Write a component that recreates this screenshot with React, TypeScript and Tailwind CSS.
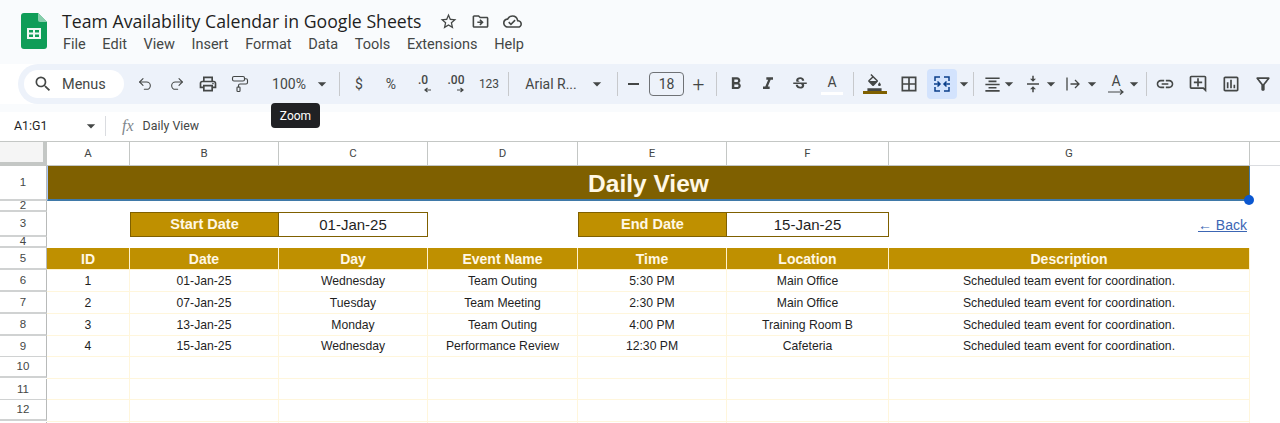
import type { ReactNode } from 'react';
import { PaintRoller, Redo2, Undo2 } from 'lucide-react';
import {
  MdArrowDropDown,
  MdBorderAll,
  MdFormatAlignCenter,
  MdFormatBold,
  MdFormatColorFill,
  MdFormatItalic,
  MdLink,
  MdOutlineAddComment,
  MdOutlineCloudDone,
  MdOutlineDriveFileMove,
  MdOutlineFilterAlt,
  MdOutlineInsertChart,
  MdOutlinePrint,
  MdOutlineStarBorder,
  MdSearch,
  MdStrikethroughS,
  MdVerticalAlignCenter,
} from 'react-icons/md';

const menus = ['File', 'Edit', 'View', 'Insert', 'Format', 'Data', 'Tools', 'Extensions', 'Help'];

const columns = ['A', 'B', 'C', 'D', 'E', 'F', 'G'];

const headers = ['ID', 'Date', 'Day', 'Event Name', 'Time', 'Location', 'Description'];

const note = 'Scheduled team event for coordination.';

const events = [
  ['1', '01-Jan-25', 'Wednesday', 'Team Outing', '5:30 PM', 'Main Office', note],
  ['2', '07-Jan-25', 'Tuesday', 'Team Meeting', '2:30 PM', 'Main Office', note],
  ['3', '13-Jan-25', 'Monday', 'Team Outing', '4:00 PM', 'Training Room B', note],
  ['4', '15-Jan-25', 'Wednesday', 'Performance Review', '12:30 PM', 'Cafeteria', note],
];

function SheetsLogo() {
  return (
    <svg width="26" height="36" viewBox="0 0 26 36">
      <path d="M3 0h14l9 9v24a3 3 0 0 1-3 3H3a3 3 0 0 1-3-3V3a3 3 0 0 1 3-3z" fill="#0f9d58" />
      <path d="M17 0l9 9h-7a2 2 0 0 1-2-2z" fill="#87ceac" />
      <path d="M6 15h14v11H6z M8 17v2.500h4V17z M14 17v2.500h4V17z M8 21.500V24h4v-2.500z M14 21.500V24h4v-2.500z" fill="#f1f8f4" fillRule="evenodd" />
    </svg>
  );
}

function Tool({ w, children }: { w: string; children: ReactNode }) {
  return <div className={`flex h-full shrink-0 items-center justify-center ${w}`}>{children}</div>;
}

function Sep({ className = '' }: { className?: string }) {
  return <div className={`h-[24px] w-px shrink-0 bg-[#c7c9cc] ${className}`} />;
}

function Drop({ w = 'w-[20px]' }: { w?: string }) {
  return (
    <Tool w={w}>
      <MdArrowDropDown size={20} className="shrink-0" />
    </Tool>
  );
}

function MergeIcon() {
  return (
    <svg width="18" height="18" viewBox="0 0 18 18" fill="none" stroke="#0b3f8a" strokeWidth="1.500">
      <path d="M2 6V2h5M16 6V2h-5M2 12v4h5M16 12v4h-5" />
      <path d="M1 9h6M4.500 6.500 7 9l-2.500 2.500M17 9h-6M13.500 6.500 11 9l2.500 2.500" />
    </svg>
  );
}

function WrapIcon() {
  return (
    <svg width="18" height="18" viewBox="0 0 18 18" fill="none" stroke="#444746" strokeWidth="1.300">
      <path d="M3 2.500v13M6.500 9H15M11 5l4 4-4 4" />
    </svg>
  );
}

function RotateIcon() {
  return (
    <div className="flex h-[21px] w-[18px] flex-col items-center">
      <span className="text-[14px] leading-[15px]">A</span>
      <svg width="18" height="6" viewBox="0 0 18 6" fill="none" stroke="#444746" strokeWidth="1.200">
        <path d="M1 3h15M13 .5 16 3l-3 2.500" />
      </svg>
    </div>
  );
}

function DecimalIcon({ label, arrow }: { label: string; arrow: 'left' | 'right' }) {
  return (
    <div className="flex h-[22px] w-[22px] flex-col text-center text-[12px] font-medium leading-[14px]">
      {label}
      <svg width="22" height="6" viewBox="0 0 22 6" fill="none" stroke="#444746" strokeWidth="1.200">
        {arrow === 'left' ? <path d="M19 3h-6M15.500 1 13 3l2.500 2" /> : <path d="M12 3h6M15.500 1 18 3l-2.500 2" />}
      </svg>
    </div>
  );
}

function Toolbar() {
  return (
    <div className="relative ml-[18px] flex h-[40px] items-center rounded-l-[20px] bg-[#edf2fa] pl-[6px] text-[#444746]">
      <div className="mr-[5px] flex h-[28px] w-[100px] shrink-0 items-center rounded-full bg-white pl-[9px]">
        <MdSearch size={20} />
        <span className="ml-[9px] mt-[1px] text-[14.500px]">Menus</span>
      </div>
      <Tool w="w-[32px]"><Undo2 size={16} strokeWidth={1.600} /></Tool>
      <Tool w="w-[31px]"><Redo2 size={16} strokeWidth={1.600} /></Tool>
      <Tool w="w-[32px]"><MdOutlinePrint size={20} /></Tool>
      <Tool w="w-[32px]"><PaintRoller size={18} strokeWidth={1.500} /></Tool>
      <Tool w="w-[56px]"><span className="pl-[10px] text-[14px]">100%</span></Tool>
      <Drop />
      <Sep className="ml-[7px]" />
      <Tool w="w-[38px]"><span className="text-[14px]">$</span></Tool>
      <Tool w="w-[26px]"><span className="text-[14px]">%</span></Tool>
      <Tool w="w-[38px]"><DecimalIcon label=".0" arrow="left" /></Tool>
      <Tool w="w-[28px]"><DecimalIcon label=".00" arrow="right" /></Tool>
      <Tool w="w-[38px]"><span className="text-[12px]">123</span></Tool>
      <Sep />
      <Tool w="w-[74px]"><span className="pl-[10px] text-[14px]">Arial R...</span></Tool>
      <Drop w="w-[28px]" />
      <Sep className="ml-[6px]" />
      <Tool w="w-[31px]"><span className="h-[1.500px] w-[11px] bg-[#444746]" /></Tool>
      <div className="flex h-[24px] w-[35px] shrink-0 items-center justify-center rounded-[4px] border border-[#6f7276] text-[14px]">18</div>
      <Tool w="w-[29px]"><span className="text-[21px] font-light leading-none">+</span></Tool>
      <Sep className="ml-[3px]" />
      <Tool w="w-[37px]"><MdFormatBold size={20} /></Tool>
      <Tool w="w-[28px]"><MdFormatItalic size={20} /></Tool>
      <Tool w="w-[36px]"><MdStrikethroughS size={18} /></Tool>
      <Tool w="w-[28px]">
        <div className="flex flex-col items-center">
          <span className="text-[14px] leading-[16px]">A</span>
          <span className="mt-[2px] h-[3px] w-[22px] bg-white" />
        </div>
      </Tool>
      <Sep className="ml-[7px]" />
      <Tool w="w-[41px]">
        <div className="flex flex-col items-center">
          <MdFormatColorFill size={17} />
          <span className="h-[3px] w-[24px] bg-[#7f6000]" />
        </div>
      </Tool>
      <Tool w="w-[27px]"><MdBorderAll size={20} /></Tool>
      <div className="ml-[5px] flex h-[30px] w-[30px] shrink-0 items-center justify-center rounded-[4px] bg-[#d3e3fd]">
        <MergeIcon />
      </div>
      <Drop w="w-[13px]" />
      <Sep className="ml-[3px]" />
      <div className="ml-[5px] flex h-full shrink-0 items-center">
        <Tool w="w-[26px]"><MdFormatAlignCenter size={19} /></Tool>
        <Drop w="w-[8px]" />
      </div>
      <div className="ml-[7px] flex h-full shrink-0 items-center">
        <Tool w="w-[26px]"><MdVerticalAlignCenter size={18} /></Tool>
        <Drop w="w-[10px]" />
      </div>
      <div className="ml-[4px] flex h-full shrink-0 items-center">
        <Tool w="w-[26px]"><WrapIcon /></Tool>
        <Drop w="w-[12px]" />
      </div>
      <div className="ml-[5px] flex h-full shrink-0 items-center">
        <Tool w="w-[26px]"><RotateIcon /></Tool>
        <Drop w="w-[10px]" />
      </div>
      <Sep className="ml-[7px]" />
      <Tool w="w-[36px]"><MdLink size={20} /></Tool>
      <Tool w="w-[30px]"><MdOutlineAddComment size={20} /></Tool>
      <Tool w="w-[36px]"><MdOutlineInsertChart size={20} /></Tool>
      <Tool w="w-[28px]"><MdOutlineFilterAlt size={20} /></Tool>
      <div className="absolute left-[253px] top-[39px] z-10 flex h-[25px] w-[49px] items-center justify-center rounded-[4px] bg-[#202124] text-[12px] text-white">
        Zoom
      </div>
    </div>
  );
}

function RowNum({ n, h }: { n: number; h: string }) {
  return (
    <div className={`flex ${h} items-center justify-center border-b-[2px] border-r border-[#d0d2d2] border-r-[#b8bab9] bg-white pt-[1px] text-[11.500px] text-[#444746]`}>
      {n}
    </div>
  );
}

function Grid() {
  return (
    <div className="grid grid-cols-[47px_83px_149px_149px_150px_149px_162px_361px_1fr] grid-rows-[24px_35px_11px_25px_11px_22px_22px_22px_22px_21px_22px_21px_22px_3px] border-t border-[#c4c7c5] font-['Liberation_Sans',sans-serif] text-[12.200px] text-[#1f1f1f]">
      {/* Column letters */}
      <div className="border-b-[4px] border-r-[4px] border-[#c4c7c5] bg-[#f5f5f5]" />
      {columns.map((c) => (
        <div key={c} className="flex items-center justify-center border-b border-r border-[#c4c7c5] font-['Roboto',sans-serif] text-[11.500px] text-[#444746]">
          {c}
        </div>
      ))}
      <div className="border-b border-[#dadce0]" />

      {/* Row 1 title */}
      <RowNum n={1} h="h-[35px]" />
      <div className="col-span-7 flex items-center justify-center border-b-[2px] border-l border-r border-[#3f79a8] border-l-[#a8c7fa] bg-[#7f6000] pt-[3px] text-[24.500px] font-bold text-[#fff8e6]">
        Daily View
      </div>
      <div className="relative">
        <span className="absolute left-[-6px] top-[29px] z-10 h-[10px] w-[10px] rounded-full bg-[#0b57d0]" />
      </div>

      {/* Row 2 */}
      <RowNum n={2} h="h-[11px]" />
      <div className="col-span-8" />

      {/* Row 3 date range */}
      <RowNum n={3} h="h-[25px]" />
      <div />
      <div className="flex items-center justify-center border border-[#7f6000] bg-[#bf9000] pt-[1px] text-[14.500px] font-bold text-[#fff8e6]">Start Date</div>
      <div className="flex items-center justify-center border border-l-0 border-[#7f6000] bg-white pt-[1px] text-[15px]">01-Jan-25</div>
      <div />
      <div className="flex items-center justify-center border border-[#7f6000] bg-[#bf9000] pt-[1px] text-[14.500px] font-bold text-[#fff8e6]">End Date</div>
      <div className="flex items-center justify-center border border-l-0 border-[#7f6000] bg-white pt-[1px] text-[15px]">15-Jan-25</div>
      <div className="flex items-center justify-end pr-[3px] pt-[1px] text-[14px] text-[#3c66b4] underline">← Back</div>
      <div />

      {/* Row 4 */}
      <RowNum n={4} h="h-[11px]" />
      <div className="col-span-8" />

      {/* Row 5 headers */}
      <RowNum n={5} h="h-[22px]" />
      {headers.map((h) => (
        <div key={h} className="flex items-center justify-center border-b border-r border-[#fff2cc] bg-[#bf9000] pt-[2px] text-[14px] font-bold text-[#fff8e6]">
          {h}
        </div>
      ))}
      <div />

      {/* Rows 6-9 */}
      {events.map((row, i) => (
        <div key={row[0]} className="contents">
          <RowNum n={i + 6} h="h-[22px]" />
          {row.map((cell, j) => (
            <div key={j} className="flex items-center justify-center border-b border-r border-[#fff6dc] bg-white pt-[1px]">
              {cell}
            </div>
          ))}
          <div />
        </div>
      ))}

      {/* Empty rows */}
      {[10, 11, 12].map((n) => (
        <div key={n} className="contents">
          <RowNum n={n} h={n === 11 ? 'h-[22px]' : 'h-[21px]'} />
          {columns.map((c) => (
            <div key={c} className="border-b border-r border-[#fff6dc]" />
          ))}
          <div />
        </div>
      ))}
      <div className="border-r border-[#b8bab9]" />
      {columns.map((c) => (
        <div key={c} className="border-r border-[#fff6dc]" />
      ))}
      <div />
    </div>
  );
}

export default function App() {
  return (
    <div className="h-[423px] w-[1280px] overflow-hidden bg-white font-['Roboto',sans-serif]">
      {/* Title bar */}
      <div className="flex h-[64px] bg-[#f9fbfd]">
        <div className="ml-[21px] mt-[13px]">
          <SheetsLogo />
        </div>
        <div className="ml-[15px] mt-[8px]">
          <div className="flex h-[26px] items-center">
            <span className="font-['Open_Sans',sans-serif] text-[17.700px] text-[#1f1f1f]">Team Availability Calendar in Google Sheets</span>
            <div className="ml-[17px] flex items-center gap-[13px] text-[#444746]">
              <MdOutlineStarBorder size={19} />
              <MdOutlineDriveFileMove size={19} />
              <MdOutlineCloudDone size={19} />
            </div>
          </div>
          <div className="ml-[1px] mt-[2px] flex gap-[16.600px] text-[14.500px] leading-[18px] text-[#444746]">
            {menus.map((m) => (
              <span key={m}>{m}</span>
            ))}
          </div>
        </div>
      </div>

      <Toolbar />
      <div className="h-[8px] bg-[#f9fbfd]" />

      {/* Formula bar */}
      <div className="flex h-[29px] items-center bg-white pb-[1px] text-[12.400px] text-[#444746]">
        <div className="w-[81px] pl-[14px] text-[#1f1f1f]">A1:G1</div>
        <MdArrowDropDown size={20} />
        <div className="ml-[4px] h-[20px] w-px bg-[#dadce0]" />
        <span className="ml-[16px] font-['Liberation_Serif',serif] text-[16px] italic text-[#80868b]">fx</span>
        <span className="ml-[9px]">Daily View</span>
      </div>

      <Grid />
    </div>
  );
}
